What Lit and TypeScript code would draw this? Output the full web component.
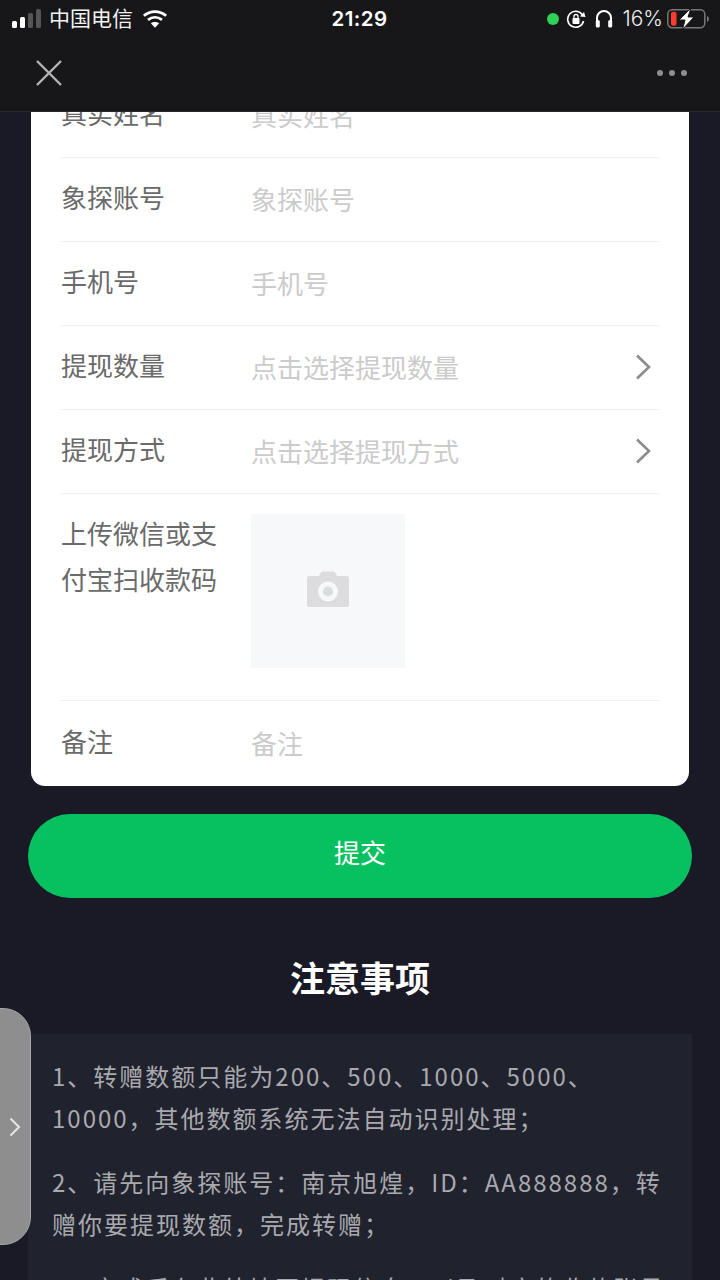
import { LitElement, html, css } from "lit";
import { customElement } from "lit/decorators.js";

const chevron = html`<svg class="chev" width="16" height="26" viewBox="0 0 16 26" fill="none" stroke="#8c8c8c" stroke-width="2.6"><path d="M2 1.5 L14 13 L2 24.5"/></svg>`;

@customElement("app-root")
export class AppRoot extends LitElement {
  static styles = css`
    :host { display: block; width: 720px; height: 1280px; overflow: hidden; position: relative; background: #1a1a26;
      font-family: "Noto Sans CJK SC", "Liberation Sans", sans-serif; }
    .top { position: relative; z-index: 2; height: 111px; background: #171719; color: #fff; box-shadow: 0 1px 0 #2a2a2c; }
    .status { height: 37px; display: grid; grid-template-columns: 1fr auto 1fr; align-items: center; padding: 0 9px 0 12px; }
    .left, .right { display: flex; align-items: center; }
    .right { justify-content: flex-end; }
    .carrier { font-size: 21px; margin-left: 7px; color: #f2f2f2; line-height: 35px; height: 37px; }
    .wifi { margin-left: 9px; }
    .time { font-family: "Inter", "Liberation Sans", sans-serif; font-size: 20.5px; font-weight: 600; letter-spacing: 0.4px; margin-left: -4px; }
    .dot { width: 12px; height: 12px; border-radius: 50%; background: #30d158; margin-right: -1px; }
    .pct { font-family: "Inter", "Liberation Sans", sans-serif; font-size: 21px; margin: 0 4px 0 9px; color: #eee; font-weight: 300; }
    .nav { height: 74px; display: flex; align-items: center; justify-content: space-between; padding: 0 33px 0 36px; margin-top: -1px; }
    .more { display: flex; gap: 6px; }
    .more i { width: 6px; height: 6px; border-radius: 50%; background: #8e8e8e; }

    .main { display: flex; flex-direction: column; align-items: center; margin-top: -37px; }
    .card { width: 658px; background: #fff; border-radius: 0 0 14px 14px; padding: 0 30px; box-sizing: border-box; height: 712px; display: flex; flex-direction: column; }
    .row { display: flex; align-items: center; height: 84px; border-bottom: 1px solid #f0f0f0; box-sizing: border-box; flex: none; font-size: 26px; }
    .row:last-child { border-bottom: 0; height: 85px; }
    .label { width: 190px; flex: none; color: #6a6a6a; line-height: 46px; margin-bottom: 6px; }
    .value { color: #cbcbcb; flex: 1; margin-bottom: 2px; }
    .chev { margin-right: 8px; margin-bottom: 2px; }
    .upload { height: 207px; align-items: flex-start; padding-top: 20px; }
    .upload .label { width: 190px; padding-right: 30px; box-sizing: border-box; margin-top: -4px; margin-bottom: 0; }
    .photo { width: 154px; height: 154px; background: #f7f8fa; display: flex; align-items: center; justify-content: center; }
    .photo svg { margin-bottom: 5px; }

    .btn { width: 664px; height: 84px; border-radius: 42px; background: #07c160; color: #fff; font-size: 26px; margin-top: 28px; display: flex; align-items: center; justify-content: center; padding-bottom: 9px; box-sizing: border-box; }
    h2 { margin: 52px 0 0; height: 56px; line-height: 54px; font-size: 35px; font-weight: 700; color: #fff; text-align: center; }
    .notes { width: 664px; margin-top: 28px; background: #20222e; padding: 21px 24px 0; box-sizing: border-box; color: #a9a9ad; font-size: 24px; line-height: 42px; letter-spacing: 2px; }
    .notes p { margin: 0 0 22px; }
    .side { position: absolute; z-index: 3; left: -2px; top: 1008px; width: 33px; height: 237px; box-sizing: border-box; background: #8e8e8e; border: 1px solid #a6a6a6; border-radius: 0 28px 28px 0; display: flex; align-items: center; justify-content: center; padding-left: 1px; }
  `;

  render() {
    return html`
      <div class="top">
        <div class="status">
          <div class="left">
            <svg width="30" height="26" viewBox="0 0 30 26">
              <rect x="0" y="15" width="5" height="7" rx="1.5" fill="#fff"/>
              <rect x="8" y="11" width="5" height="11" rx="1.5" fill="#fff"/>
              <rect x="16" y="7" width="5" height="15" rx="1.5" fill="#555"/>
              <rect x="24" y="3" width="5" height="19" rx="1.5" fill="#555"/>
            </svg>
            <span class="carrier">中国电信</span>
            <svg class="wifi" width="26" height="19" viewBox="0 0 28 20" fill="none" stroke="#fff" stroke-width="3">
              <path d="M2 7 C9 1 19 1 26 7"/>
              <path d="M6.5 11.5 C11 8 17 8 21.5 11.5"/>
              <path d="M14 20 L9.5 15.2 C12 13.4 16 13.4 18.5 15.2 Z" fill="#fff" stroke="none"/>
            </svg>
          </div>
          <div class="time">21:29</div>
          <div class="right">
            <span class="dot"></span>
            <svg style="margin-left:8px" width="20" height="20" viewBox="0 0 20 20" fill="none" stroke="#fff" stroke-width="1.6">
              <path d="M16.5 6 A8 8 0 1 0 17.5 12"/>
              <path d="M14 7.5 L19.5 8 L18 3" fill="#fff" stroke="none"/>
              <rect x="6.5" y="9" width="7" height="6" rx="1" fill="#fff" stroke="none"/>
              <path d="M8 9 V7.5 a2 2 0 0 1 4 0 V9" stroke-width="1.3"/>
            </svg>
            <svg style="margin-left:9px" width="18" height="20" viewBox="0 0 18 20" fill="none" stroke="#fff" stroke-width="2">
              <path d="M2 14 V9 a7 7 0 0 1 14 0 V14"/>
              <rect x="0.8" y="11" width="4" height="7.5" rx="1.6" fill="#fff" stroke="none"/>
              <rect x="13.2" y="11" width="4" height="7.5" rx="1.6" fill="#fff" stroke="none"/>
            </svg>
            <span class="pct">16%</span>
            <svg width="44" height="22" viewBox="0 0 44 22">
              <rect x="0.8" y="1.8" width="37" height="18" rx="4.5" fill="none" stroke="#777" stroke-width="1.5"/>
              <rect x="4" y="3.8" width="5.5" height="14" rx="2" fill="#ff3b30"/>
              <path d="M40 8 C42.5 8.5 42.5 13.5 40 14 Z" fill="#777"/>
              <path d="M24 0 L12 12 H18 L15.5 21.5 L27 9 H21 Z" fill="#fff" stroke="#171719" stroke-width="1"/>
            </svg>
          </div>
        </div>
        <div class="nav">
          <svg width="26" height="26" viewBox="0 0 26 26" stroke="#b4b4b4" stroke-width="2.4"><path d="M1 1 L25 25 M25 1 L1 25"/></svg>
          <div class="more"><i></i><i></i><i></i></div>
        </div>
      </div>
      <div class="main">
        <div class="card">
          <div class="row"><span class="label">真实姓名</span><span class="value">真实姓名</span></div>
          <div class="row"><span class="label">象探账号</span><span class="value">象探账号</span></div>
          <div class="row"><span class="label">手机号</span><span class="value">手机号</span></div>
          <div class="row"><span class="label">提现数量</span><span class="value">点击选择提现数量</span>${chevron}</div>
          <div class="row"><span class="label">提现方式</span><span class="value">点击选择提现方式</span>${chevron}</div>
          <div class="row upload"><span class="label">上传微信或支付宝扫收款码</span>
            <div class="photo">
              <svg width="42" height="36" viewBox="0 0 42 36">
                <path d="M13 3 Q13.5 0.5 16 0.5 H26 Q28.5 0.5 29 3 L30 5 H40 Q42 5 42 7 V34 Q42 36 40 36 H2 Q0 36 0 34 V7 Q0 5 2 5 H12 Z" fill="#dcdcde"/>
                <circle cx="21" cy="20.5" r="10" fill="#f7f8fa"/>
                <circle cx="21" cy="20.5" r="5" fill="#dcdcde"/>
              </svg>
            </div>
          </div>
          <div class="row"><span class="label">备注</span><span class="value">备注</span></div>
        </div>
        <div class="btn">提交</div>
        <h2>注意事项</h2>
        <div class="notes">
          <p>1、转赠数额只能为200、500、1000、5000、10000，其他数额系统无法自动识别处理；</p>
          <p>2、请先向象探账号：南京旭煌，ID：AA888888，转赠你要提现数额，完成转赠；</p>
          <p>3、完成后在此处填写提现信息，以及对应的收款账号</p>
        </div>
      </div>
      <div class="side">
        <svg width="12" height="20" viewBox="0 0 12 20" fill="none" stroke="#e6e6e6" stroke-width="2"><path d="M1.5 1.5 L10 10 L1.5 18.5"/></svg>
      </div>
    `;
  }
}
